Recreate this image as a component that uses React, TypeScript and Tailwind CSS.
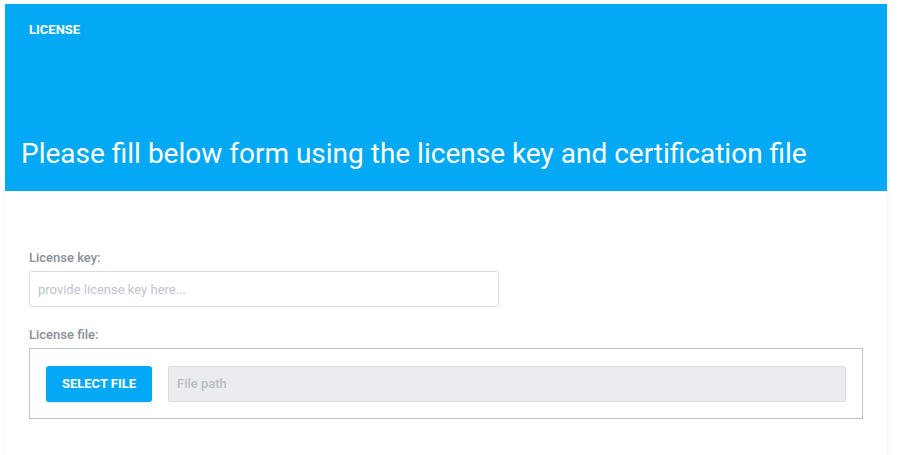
import React from 'react';

const font = { fontFamily: 'Roboto, "Liberation Sans", sans-serif' };

export default function App() {
    return (
        <div className="min-h-[455px] bg-white pl-[5px] pr-[14px] pt-[4px]" style={font}>
            <div className="min-h-[451px] bg-white shadow-[0_0_6px_rgba(0,0,0,0.06)]">
                <div className="flex h-[187px] flex-col justify-between bg-[#03a9f4] pb-[20px] pt-[18px]">
                    <div className="pl-[24px] text-[13px] font-bold leading-[16px] text-white">LICENSE</div>
                    <h1 className="pl-[16px] text-[28px] font-normal leading-[34px] text-white">
                        Please fill below form using the license key and certification file
                    </h1>
                </div>
                <div className="px-[24px] pt-[58px] pb-[30px]">
                    <label className="mb-[4px] block text-[13px] font-medium leading-[18px] text-[#8a8f99]">License key:</label>
                    <input
                        type="text"
                        placeholder="provide license key here..."
                        className="block h-[36px] w-[470px] rounded-[3px] border border-[#dadde2] bg-white px-[8px] text-[13px] text-[#555] outline-none placeholder:text-[#c0c4cc]"
                    />
                    <label className="mb-[4px] mt-[19px] block text-[13px] font-medium leading-[18px] text-[#8a8f99]">License file:</label>
                    <div className="flex h-[71px] w-[834px] items-center gap-[16px] border border-[#b8c1cc] px-[16px]">
                        <button className="h-[36px] w-[106px] rounded-[3px] bg-[#03a9f4] text-[13px] font-bold text-white shadow-sm">
                            SELECT FILE
                        </button>
                        <div className="flex h-[36px] flex-1 items-center rounded-[2px] border border-[#dcdde2] bg-[#ebecf0] px-[8px] text-[13px] font-medium text-[#b8bcc4]">
                            File path
                        </div>
                    </div>
                </div>
            </div>
        </div>
    );
}
